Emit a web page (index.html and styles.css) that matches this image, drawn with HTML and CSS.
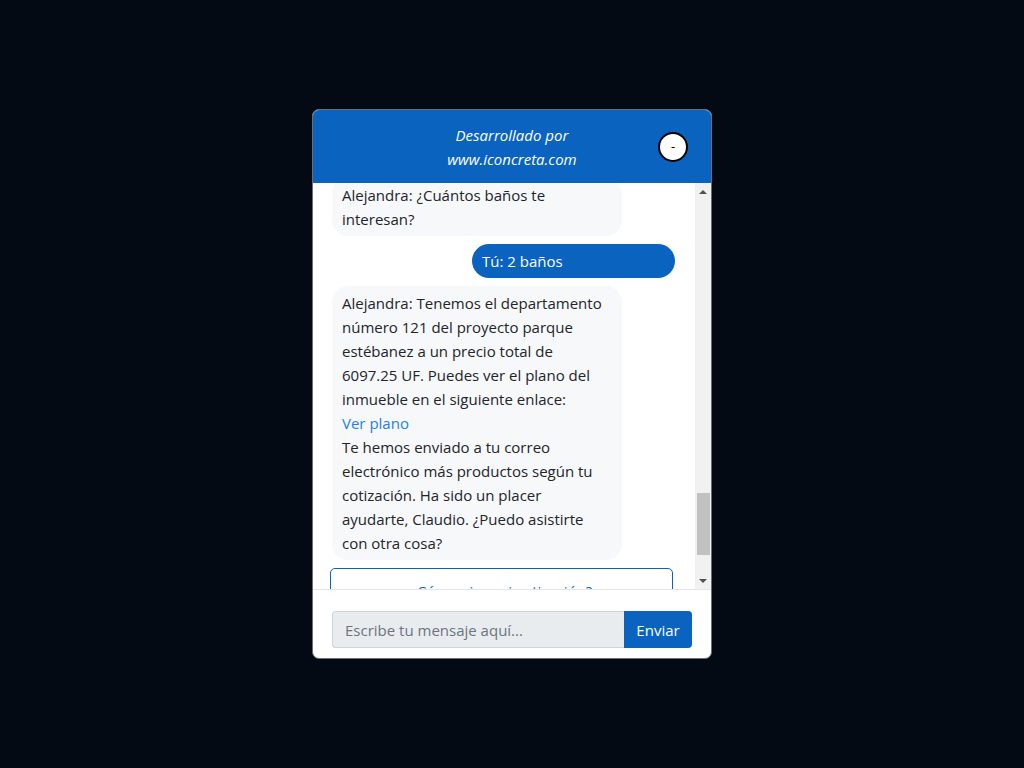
FILE: index.html
```html
<!DOCTYPE html>
<html lang="es">
<head>
<meta charset="utf-8">
<title>Chat</title>
<link rel="stylesheet" href="styles.css">
</head>
<body>
<div class="page">
  <div class="widget">
    <div class="header">
      <div class="header-text">Desarrollado por<br>www.iconcreta.com</div>
      <button class="minimize">-</button>
    </div>
    <div class="body">
      <div class="messages" id="messages">
        <div class="msg bot">Alejandra: ¿Cuántos dormitorios buscas?</div>
        <div class="msg user">Tú: 3 dormitorios</div>
        <div class="msg bot" id="anchor">Alejandra: ¿Cuántos baños te interesan?</div>
        <div class="msg user">Tú: 2 baños</div>
        <div class="msg bot">Alejandra: Tenemos el departamento número 121 del proyecto parque estébanez a un precio total de 6097.25 UF. Puedes ver el plano del inmueble en el siguiente enlace:<br><a class="link" href="#">Ver plano</a><br>Te hemos enviado a tu correo electrónico más productos según tu cotización. Ha sido un placer ayudarte, Claudio. ¿Puedo asistirte con otra cosa?</div>
        <button class="option">¿Cómo sigo mi cotización?</button>
        <button class="option">No, gracias</button>
      </div>
      <div class="scrollbar">
        <div class="arrow up"></div>
        <div class="track"><div class="thumb"></div></div>
        <div class="arrow down"></div>
      </div>
    </div>
    <div class="footer">
      <input class="input" type="text" placeholder="Escribe tu mensaje aquí...">
      <button class="send">Enviar</button>
    </div>
  </div>
</div>
<script src="script.js"></script>
</body>
</html>
```

FILE: styles.css
```css
* { box-sizing: border-box; }
html, body { margin: 0; padding: 0; }
body {
  background: #030a14;
  font-family: "Open Sans", "Noto Sans", sans-serif;
  font-size: 15px;
  color: #212529;
}
.page {
  height: 100vh;
  display: flex;
  align-items: center;
  justify-content: center;
}
.widget {
  width: 400px;
  height: 550px;
  background: #fff;
  border: 1px solid #6b6f75;
  border-radius: 7px;
  overflow: hidden;
  display: flex;
  flex-direction: column;
}
.header {
  position: relative;
  height: 73px;
  flex: none;
  background: #0a63be;
  color: #fff;
  display: flex;
  align-items: center;
  justify-content: center;
}
.header-text {
  font-style: italic;
  text-align: center;
  line-height: 24px;
  font-size: 15px;
}
.minimize {
  position: absolute;
  right: 23px;
  top: 22px;
  width: 30px;
  height: 30px;
  border-radius: 50%;
  border: 2px solid #000;
  background: #fff;
  color: #000;
  font-family: "Open Sans", sans-serif;
  font-size: 13px;
  line-height: 1;
  padding: 0 0 2px 0;
  display: flex;
  align-items: center;
  justify-content: center;
}
.body {
  flex: 1;
  display: flex;
  min-height: 0;
}
.messages {
  flex: 1;
  overflow: hidden;
  display: flex;
  flex-direction: column;
  gap: 8px;
  padding: 10px 20px 10px 19px;
}
.msg {
  line-height: 24px;
  padding: 5px 12px 5px 10px;
  border-radius: 16px;
}
.msg.bot {
  background: #f7f8fa;
  width: 290px;
  align-self: flex-start;
}
.msg.user {
  background: #0a63be;
  color: #fff;
  width: 203px;
  align-self: flex-end;
  border-radius: 17px;
}
.link {
  color: #1a80f0;
  text-decoration: none;
}
.option {
  font-family: inherit;
  font-size: 15px;
  line-height: 24px;
  color: #0a63be;
  background: #fff;
  border: 1px solid #0a63be;
  border-radius: 5px;
  padding: 10px;
  margin: 0 2px 0 -2px;
  flex: none;
}
.scrollbar {
  width: 16px;
  flex: none;
  background: #f1f1f1;
  display: flex;
  flex-direction: column;
}
.arrow {
  height: 17px;
  flex: none;
  display: flex;
  align-items: center;
  justify-content: center;
}
.arrow::before {
  content: "";
  width: 0;
  height: 0;
  border-left: 4px solid transparent;
  border-right: 4px solid transparent;
}
.arrow.up::before { border-bottom: 4px solid #505050; }
.arrow.down::before { border-top: 4px solid #505050; }
.track {
  flex: 1;
  display: flex;
  flex-direction: column;
  justify-content: flex-end;
  padding: 0 1px 17px 2px;
}
.thumb {
  height: 62px;
  background: #c1c1c1;
}
.footer {
  flex: none;
  height: 69px;
  border-top: 1px solid #e3e6ea;
  padding: 21px 19px 10px 19px;
  display: flex;
}
.input {
  flex: 1;
  height: 37px;
  font-family: inherit;
  font-size: 15px;
  color: #212529;
  background: #e9ecef;
  border: 1px solid #ced4da;
  border-right: none;
  border-radius: 4px 0 0 4px;
  padding: 6px 12px;
  outline: none;
}
.input::placeholder { color: #6c757d; }
.send {
  width: 68px;
  height: 37px;
  font-family: inherit;
  font-size: 15px;
  color: #fff;
  background: #0a63be;
  border: none;
  border-radius: 0 4px 4px 0;
}
```

FILE: script.js
```js
(function () {
  var list = document.getElementById('messages');
  var anchor = document.getElementById('anchor');
  var offset = anchor.getBoundingClientRect().top - list.getBoundingClientRect().top;
  list.scrollTop = offset + 5;
})();
```
